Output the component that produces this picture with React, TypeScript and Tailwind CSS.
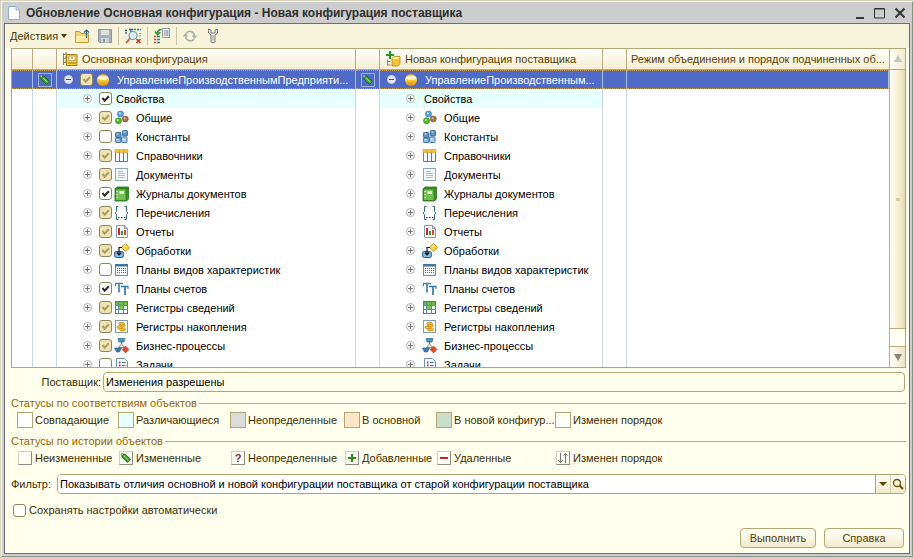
import React from 'react';

type CheckState = 'off' | 'on' | 'partial';
type RowItem = { name: string; state: CheckState; icon?: React.ReactNode };

function Icon({ children }: { children: React.ReactNode }) {
  return (
    <svg viewBox="0 0 16 16" className="size-4 shrink-0" fill="none" aria-hidden="true">
      {children}
    </svg>
  );
}

const icons = {
  sphere: (
    <Icon>
      <defs>
        <linearGradient id="ball" x1="0" y1="0" x2="0" y2="1">
          <stop offset="0" stopColor="#e9a515" />
          <stop offset="0.3" stopColor="#fff3b0" />
          <stop offset="0.55" stopColor="#fbc62c" />
          <stop offset="1" stopColor="#d98d0a" />
        </linearGradient>
      </defs>
      <circle cx="8" cy="8" r="6" fill="url(#ball)" />
      <ellipse cx="8" cy="6" rx="4" ry="2" fill="#fffbe0" opacity="0.8" />
    </Icon>
  ),
  common: (
    <Icon>
      <circle cx="6.5" cy="4" r="3" fill="#5aa3dc" stroke="#2f77b5" strokeWidth="0.7" />
      <circle cx="4.5" cy="10.8" r="3" fill="#52b82c" stroke="#2f8a14" strokeWidth="0.7" />
      <circle cx="11.3" cy="9" r="3" fill="#a8724c" stroke="#845030" strokeWidth="0.7" />
      <circle cx="5.8" cy="3.2" r="1" fill="#cfe8fa" />
      <circle cx="3.8" cy="10" r="1" fill="#c0f0a0" />
      <circle cx="10.6" cy="8.2" r="1" fill="#dfc0a8" />
    </Icon>
  ),
  constants: (
    <Icon>
      <g stroke="#285f8c" strokeWidth="0.8">
        <rect x="1.5" y="3.5" width="5.5" height="5" rx="0.8" fill="#5b96c4" />
        <rect x="8.5" y="1.5" width="5" height="5.5" rx="0.8" fill="#5b96c4" />
        <rect x="1.5" y="9" width="5.5" height="4.5" rx="0.8" fill="#85badf" />
        <rect x="7.5" y="8" width="5.5" height="5.5" rx="0.8" fill="#a7d0ea" />
      </g>
      <path d="M2.5 5h2M9.5 3h2M2.5 10.5h2M8.5 10h2" stroke="#d8edfa" />
    </Icon>
  ),
  catalogs: (
    <Icon>
      <path d="M1.5 2v11.5h12V2M5.5 4v9.500M9.500 4v9.500" stroke="#56809f" />
      <path d="M2 4h3v9H2zM6 4h3v9H6zM10 4h3v9h-3z" fill="#f4fafd" />
      <path d="M1 1.500h4v3H1zM5.500 1.500h4v3h-4zM10 1.500h4v3h-4z" fill="#f6c335" stroke="#c7922a" strokeWidth="0.500" />
    </Icon>
  ),
  documents: (
    <Icon>
      <rect x="1.5" y="1.5" width="12" height="12" fill="#f5fafd" stroke="#8ba8bd" />
      <path d="M4 4.500h5M4 6.500h7M4 8.500h7M4 10.500h7" stroke="#a5c0d5" />
    </Icon>
  ),
  journals: (
    <Icon>
      <path d="M3 1h11.500v12l-2 2H1V3z" fill="#388f28" stroke="#22701a" strokeWidth="0.800" />
      <rect x="1.500" y="3" width="10.500" height="11.500" fill="#74bf50" stroke="#2b7d1c" strokeWidth="0.800" />
      <rect x="5.500" y="5" width="4.500" height="3" fill="#e8f8d8" />
      <path d="M2.500 5.500h1.500M2.500 8.500h1.500M2.500 11.500h1.500" stroke="#e4f4d4" />
    </Icon>
  ),
  enums: (
    <Icon>
      <path d="M4.500 1.500H2.500v5L1 8l1.500 1.500v5h2M10.500 1.500h2v5L14 8l-1.500 1.500v5h-2" stroke="#336889" />
      <path d="M4 12.500h1.500M7 12.500h1.500M10 12.500h1.500" stroke="#223f55" />
    </Icon>
  ),
  reports: (
    <Icon>
      <path d="M2.500 1.500h8l3 3v9h-11z" fill="#f3f9fc" stroke="#7f9fb5" />
      <path d="M10.500 1.500v3h3" stroke="#7f9fb5" />
      <path d="M4 4h2v7H4z" fill="#d52a20" />
      <path d="M7 7h2v4H7z" fill="#2ea02e" />
      <path d="M10 6h2v5h-2z" fill="#e0442c" />
    </Icon>
  ),
  processing: (
    <Icon>
      <path d="M11.500 0.500l4 4-4 4-4-4z" fill="#fbd43c" stroke="#c1912a" strokeWidth="0.800" />
      <path d="M10 4l1.500-2" stroke="#fff3b0" />
      <rect x="0.700" y="8.500" width="8.600" height="6" rx="1.500" fill="#8cc0e6" stroke="#235c8e" />
      <path d="M8 4.500H5V12M2.800 9.500L5 12l2.200-2.500" stroke="#0d1a26" strokeWidth="1.200" />
    </Icon>
  ),
  characteristics: (
    <Icon>
      <rect x="1.500" y="2.500" width="12" height="11" fill="#f4f8fb" stroke="#7190a8" />
      <path d="M1 2h13v2.500H1z" fill="#3f78a6" />
      <path d="M3.500 6v6M5.500 6v6M7.500 6v6M9.500 6v6M11.500 6v6" stroke="#5c6f7e" strokeDasharray="1 1" />
    </Icon>
  ),
  accounts: (
    <Icon>
      <path d="M1 2.500h8M5 2v9.500" stroke="#3d87ba" strokeWidth="1.700" />
      <path d="M7 5.500h7.500M11 5v9" stroke="#3478aa" strokeWidth="1.700" />
      <path d="M1.500 3v2M14 6v2" stroke="#3478aa" />
    </Icon>
  ),
  infoRegisters: (
    <Icon>
      <rect x="1.500" y="1.500" width="12" height="12" fill="#f2f8fb" stroke="#4f7894" />
      <path d="M2 2h11v3H2z" fill="#6abf38" />
      <path d="M5 6h4v3H5z" fill="#7cc850" />
      <path d="M4.500 2v12M9.500 2v12M1 5.500h13M1 9.500h13" stroke="#5c8aa2" />
    </Icon>
  ),
  accumRegisters: (
    <Icon>
      <rect x="1.500" y="1.500" width="12" height="12" fill="#f5fafd" stroke="#7d9db3" />
      <g fill="#f8bf23" stroke="#c28510" strokeWidth="0.700">
        <ellipse cx="8.500" cy="10.500" rx="3" ry="1.500" />
        <ellipse cx="6" cy="8.300" rx="3" ry="1.500" />
        <ellipse cx="8.300" cy="6.300" rx="3" ry="1.500" />
        <ellipse cx="7.500" cy="4.600" rx="3" ry="1.300" />
      </g>
    </Icon>
  ),
  processes: (
    <Icon>
      <path d="M4 0.500h7l-1 3.500H5z" fill="#4b97c8" stroke="#24628e" strokeWidth="0.700" />
      <path d="M7.500 4v3M7 8L3.500 11M8 8l3.500 3" stroke="#4c5f6c" />
      <path d="M7.500 5.500l3 4h-6z" fill="#f5e4d0" stroke="#6d7c88" strokeWidth="0.700" />
      <path d="M0.500 10h7L5.500 14h-3z" fill="#3f7fae" stroke="#24557c" strokeWidth="0.600" />
      <path d="M11.500 8l3.500 3.500-3.500 3.500L8 11.500z" fill="#ee4424" stroke="#a82c14" strokeWidth="0.500" />
    </Icon>
  ),
  tasks: (
    <Icon>
      <path d="M2.500 1.500h8l3 3v9h-11z" fill="#eef6fb" stroke="#6e90a8" />
      <path d="M5 5.500h1.500M5 8.500h1.500M5 11.500h1.500" stroke="#d83a2c" strokeWidth="2" />
      <path d="M8 5.500h3.500M8 8.500h3.500M8 11.500h3.500" stroke="#3c6e94" />
    </Icon>
  ),
};

const rows: RowItem[] = [
  { name: 'Свойства', state: 'on' },
  { name: 'Общие', state: 'partial', icon: icons.common },
  { name: 'Константы', state: 'off', icon: icons.constants },
  { name: 'Справочники', state: 'partial', icon: icons.catalogs },
  { name: 'Документы', state: 'partial', icon: icons.documents },
  { name: 'Журналы документов', state: 'on', icon: icons.journals },
  { name: 'Перечисления', state: 'partial', icon: icons.enums },
  { name: 'Отчеты', state: 'partial', icon: icons.reports },
  { name: 'Обработки', state: 'partial', icon: icons.processing },
  { name: 'Планы видов характеристик', state: 'off', icon: icons.characteristics },
  { name: 'Планы счетов', state: 'on', icon: icons.accounts },
  { name: 'Регистры сведений', state: 'partial', icon: icons.infoRegisters },
  { name: 'Регистры накопления', state: 'partial', icon: icons.accumRegisters },
  { name: 'Бизнес-процессы', state: 'partial', icon: icons.processes },
  { name: 'Задачи', state: 'off', icon: icons.tasks },
];

function Check({ state, label, id }: { state: CheckState; label?: string; id?: string }) {
  return (
    <span className="relative flex size-[13px] shrink-0">
      <input
        id={id}
        type="checkbox"
        aria-label={label}
        defaultChecked={state !== 'off'}
        className={`size-[13px] appearance-none rounded-[3px] border border-[#8f8558] ${
          state === 'partial' ? 'bg-[#efe5b4]' : 'bg-white'
        }`}
      />
      {state !== 'off' && (
        <svg viewBox="0 0 13 13" className="pointer-events-none absolute inset-0 size-[13px]" fill="none" aria-hidden="true">
          <path d="M3.500 6l2.200 2.700L9.800 4.300" stroke={state === 'on' ? '#2b2b2b' : '#a89c68'} strokeWidth="2" />
        </svg>
      )}
    </span>
  );
}

function Expander({ open, label }: { open?: boolean; label: string }) {
  return (
    <button type="button" aria-label={label} className="flex size-[11px] shrink-0">
      <svg viewBox="0 0 11 11" className="size-[11px]" fill="none" aria-hidden="true">
        <circle cx="5.500" cy="5.500" r="4" fill={open ? '#e8ebf6' : '#fff'} stroke={open ? '#c9cfe6' : '#b0b0b0'} />
        <path d={open ? 'M3 5.500h5' : 'M3 5.500h5M5.500 3v5'} stroke={open ? '#3a4a90' : '#777'} />
      </svg>
    </button>
  );
}

function Pencil() {
  return (
    <svg viewBox="0 0 12 12" className="size-3 shrink-0" fill="none" aria-hidden="true">
      <path d="M1.500 1.500l3.500.8 5.500 5-3 3.200-5.300-5.200z" fill="#3fa52c" stroke="#166412" strokeWidth="0.900" />
      <path d="M4 3.800l4.500 4.400" stroke="#a4e488" />
      <path d="M1.300 1.300l2 .5-1.500 1.700z" fill="#f4e4b4" />
    </svg>
  );
}

const cell = 'h-[19px] border-r border-[#ccd6de] p-0 text-black';
const selected = 'h-[19px] border-y border-r border-y-[#c39a52] border-r-[#a9bfe0] [border-top-style:dotted] [border-bottom-style:dotted] bg-[#506bc7] p-0 text-white';
const head = 'h-[21px] border-b border-r border-[#b9ad7e] bg-linear-to-b from-[#fffef9] to-[#f5eed3] p-0 text-left font-normal text-[#574100]';

function CompareTable() {
  return (
    <div className="flex min-h-0 flex-1 overflow-hidden border border-[#b2a675] bg-white">
      <div className="min-w-0 flex-1 overflow-hidden">
        <table className="w-full table-fixed border-separate border-spacing-0">
          <colgroup>
            <col className="w-[21px]" />
            <col className="w-6" />
            <col className="w-[299px]" />
            <col className="w-6" />
            <col className="w-[223px]" />
            <col className="w-6" />
            <col />
          </colgroup>
          <thead>
            <tr>
              <th className={head} />
              <th className={head} />
              <th className={head}>
                <div className="flex items-center gap-1 pl-[5px]">
                  <Icon>
                    <path d="M1.500 2v12M1.500 3.500h3M1.500 7.500h3M1.500 11.500h3" stroke="#8a8460" />
                    <path d="M3 2h2M3 6h2M3 10h2" stroke="#d04830" />
                    <path d="M4.500 3.500h10.500v11H4.500z" fill="#f4cb3c" stroke="#a9821c" />
                    <rect x="7" y="5" width="6" height="4.500" fill="#fffbe6" stroke="#b89a4c" strokeWidth="0.700" />
                    <path d="M10 5.500v2.500M6 12h8" stroke="#9a7a18" />
                  </Icon>
                  <span>Основная конфигурация</span>
                </div>
              </th>
              <th className={head} />
              <th className={head}>
                <div className="flex items-center gap-1 pl-[5px]">
                  <Icon>
                    <path d="M5 0v8M1 4h8" stroke="#2a962a" strokeWidth="2.200" />
                    <path d="M2.500 8.500v6M2.500 10.500h3M2.500 14h3" stroke="#8a8460" />
                    <path d="M7 7.500l2-2h6v7l-2 2.500H7z" fill="#f3c32e" stroke="#b98a14" strokeWidth="0.800" />
                    <path d="M7.500 8h5l2-2H9.500z" fill="#fff0a0" />
                  </Icon>
                  <span>Новая конфигурация поставщика</span>
                </div>
              </th>
              <th className={head} />
              <th className="h-[21px] border-b border-[#b9ad7e] bg-linear-to-b from-[#fffef9] to-[#f5eed3] p-0 text-left font-normal text-[#574100]">
                <div className="truncate pl-1">Режим объединения и порядок подчиненных об...</div>
              </th>
            </tr>
          </thead>
          <tbody>
            <tr>
              <td className={selected} />
              <td className={selected}>
                <div className="mx-auto flex size-3.5 items-center justify-center border border-[#9fb0dc]"><Pencil /></div>
              </td>
              <td className={selected}>
                <div className="flex items-center pl-1.5">
                  <Expander open label="Свернуть основную конфигурацию" />
                  <span className="ml-1.5 flex"><Check state="partial" label="Основная конфигурация" /></span>
                  <span className="ml-0.5 flex">{icons.sphere}</span>
                  <span className="ml-1.5 min-w-0 truncate">УправлениеПроизводственнымПредприяти...</span>
                </div>
              </td>
              <td className={selected}>
                <div className="mx-auto flex size-3.5 items-center justify-center border border-[#9fb0dc]"><Pencil /></div>
              </td>
              <td className={selected}>
                <div className="flex items-center pl-1.5">
                  <Expander open label="Свернуть новую конфигурацию" />
                  <span className="ml-1.5 flex">{icons.sphere}</span>
                  <span className="ml-1.5 min-w-0 truncate">УправлениеПроизводственным...</span>
                </div>
              </td>
              <td className={selected} />
              <td className={selected} />
            </tr>
            {rows.map((row) => (
              <tr key={row.name}>
                <td className={cell} />
                <td className={cell} />
                <td className={`${cell} ${row.icon ? '' : 'bg-[#e6ffff]'}`}>
                  <div className="flex items-center pl-[25px]">
                    <Expander label={`Развернуть: ${row.name}`} />
                    <span className="ml-1.5 flex"><Check state={row.state} label={row.name} /></span>
                    {row.icon && <span className="ml-0.5 flex">{row.icon}</span>}
                    <span className={row.icon ? 'ml-1.5' : 'ml-1'}>{row.name}</span>
                  </div>
                </td>
                <td className={cell} />
                <td className={`${cell} ${row.icon ? '' : 'bg-[#e6ffff]'}`}>
                  <div className="flex items-center pl-[25px]">
                    <Expander label={`Развернуть: ${row.name}`} />
                    {row.icon && <span className="ml-1.5 flex">{row.icon}</span>}
                    <span className={row.icon ? 'ml-1.5' : 'ml-2'}>{row.name}</span>
                  </div>
                </td>
                <td className={cell} />
                <td className="h-[19px] p-0" />
              </tr>
            ))}
          </tbody>
        </table>
      </div>
      <div className="flex w-4 shrink-0 flex-col border-l border-[#b9ad7e]">
        <button type="button" aria-label="Прокрутить вверх" className="flex h-[21px] items-center justify-center border-b border-[#b9ad7e] bg-linear-to-r from-[#fffef9] to-[#f2ebcf]">
          <svg viewBox="0 0 8 8" className="size-2" aria-hidden="true"><path d="M4 0l4 7H0z" fill="#c4c4bc" /></svg>
        </button>
        <div className="flex flex-1 items-center justify-center border-b border-[#b9ad7e] bg-linear-to-r from-[#fffef6] via-[#f8f1d6] to-[#e6dbb0]">
          <span className="h-[3px] w-1 bg-[#d8cea4]" />
        </div>
        <div className="h-[17px] bg-[#fffff4]" />
        <button type="button" aria-label="Прокрутить вниз" className="flex h-[21px] items-center justify-center border-t border-[#b9ad7e] bg-linear-to-r from-[#fffef9] to-[#eee5c4]">
          <svg viewBox="0 0 8 8" className="size-2" aria-hidden="true"><path d="M4 8l4-7H0z" fill="#85857c" /></svg>
        </button>
      </div>
    </div>
  );
}

function Separator() {
  return <span className="h-[18px] w-px bg-[#c9c5a8]" />;
}

function Toolbar() {
  return (
    <div className="flex h-6 shrink-0 items-center bg-[#f6f5db] pl-[5px]">
      <button type="button" className="flex items-center gap-[3px] text-[#4a3a08]">
        Действия
        <svg viewBox="0 0 6 4" className="h-1 w-1.5" aria-hidden="true"><path d="M0 0h6L3 4z" fill="#4a3a08" /></svg>
      </button>
      <div className="ml-[7px] flex items-center gap-[5px]">
        <div className="flex gap-[7px]">
          <button type="button" aria-label="Открыть" className="flex">
            <Icon>
              <path d="M1.500 14.500v-11h4l1.500 2h7.500v9z" fill="#f5d474" stroke="#c69a38" />
              <path d="M2 8h12v6H2z" fill="#fbe9a6" />
              <path d="M12.500 10V2M10 4.500L12.500 2 15 4.500" stroke="#2f6690" strokeWidth="1.200" />
            </Icon>
          </button>
          <button type="button" aria-label="Сохранить" className="flex">
            <Icon>
              <path d="M1.500 1.500h13v13h-12l-1-1z" fill="#a9b1b5" stroke="#8d969b" />
              <path d="M4 2h8v5H4z" fill="#dfe3e3" />
              <path d="M4 10h8v4.500H4z" fill="#ced4d6" />
              <path d="M6 11h2v3H6z" fill="#8d969b" />
            </Icon>
          </button>
        </div>
        <Separator />
        <button type="button" aria-label="Отбор" className="flex">
          <svg viewBox="0 0 18 16" className="h-4 w-[18px]" fill="none" aria-hidden="true">
            <path d="M1 2.500h2M5 1.500h4M6 3.500h2" stroke="#28587a" strokeWidth="1.500" />
            <path d="M10 1.500h7M1 5h2" stroke="#2f7cae" strokeWidth="1.500" strokeDasharray="2 1" />
            <circle cx="9" cy="7.500" r="4" fill="#d8ecf8" stroke="#7b98ae" strokeWidth="1.200" />
            <path d="M6 10.500L2 15" stroke="#b07a58" strokeWidth="2" />
            <path d="M12.500 11l4 4M16.500 11l-4 4" stroke="#d8301e" strokeWidth="1.700" />
            <path d="M15 5.500h2M15 8h2" stroke="#8a9aa4" />
          </svg>
        </button>
        <Separator />
        <button type="button" aria-label="Установить соответствие" className="flex">
          <svg viewBox="0 0 18 16" className="h-4 w-[18px]" fill="none" aria-hidden="true">
            <path d="M9.500 0.500h7v9h-7z" fill="#f6fafc" stroke="#8ba2b2" />
            <path d="M11 3h1.500M11 5h1.500M11 7h1.500" stroke="#d0402c" />
            <path d="M13 3h2.500M13 5h2.500M13 7h2.500" stroke="#46718f" />
            <path d="M8.500 1.500Q5 1.500 4.500 5M2 3.500l2.500 3 3-2.500" stroke="#2e9226" strokeWidth="1.600" />
            <path d="M1 8.500h2M1 11.500h2M1 14.500h2" stroke="#d0402c" strokeWidth="1.300" />
            <path d="M4 8.500h3M4 11.500h3M4 14.500h3" stroke="#46718f" strokeWidth="1.300" />
          </svg>
        </button>
        <Separator />
        <div className="flex gap-[7px]">
          <button type="button" aria-label="Обновить" className="flex">
            <Icon>
              <path d="M4 5.500Q5.500 3 8.500 3.300Q12 4 12.500 8M12 11Q10.500 13.300 7.500 12.800Q4 12 3.500 8.500" stroke="#a9b0a6" strokeWidth="1.700" />
              <path d="M9.500 7.500H15.500L12.500 10.800zM.5 8.500H6.500L3.500 5.200z" fill="#a9b0a6" />
            </Icon>
          </button>
          <button type="button" aria-label="Настройка" className="flex">
            <Icon>
              <path d="M3.500 1v4L6 7v7q2 1.800 4 0V7l2.500-2V1L10 2.200V5H6V2.200z" fill="#e8e8e2" stroke="#80807a" strokeLinejoin="round" />
              <path d="M8 7.500v5" stroke="#9c9c96" />
            </Icon>
          </button>
        </div>
      </div>
    </div>
  );
}

const matchStatuses = [
  { label: 'Совпадающие', color: 'bg-white' },
  { label: 'Различающиеся', color: 'bg-[#e6ffff]' },
  { label: 'Неопределенные', color: 'bg-[#dcdcdc]' },
  { label: 'В основной', color: 'bg-[#ffe6c8]' },
  { label: 'В новой конфигур...', color: 'bg-[#c8dec8]' },
  { label: 'Изменен порядок', color: 'bg-[#fffffa]' },
];

const historyStatuses: { label: string; mark: React.ReactNode }[] = [
  { label: 'Неизмененные', mark: null },
  { label: 'Измененные', mark: <Pencil /> },
  { label: 'Неопределенные', mark: <span className="font-bold text-[#7a3a2c]">?</span> },
  {
    label: 'Добавленные',
    mark: <svg viewBox="0 0 12 12" className="size-3" aria-hidden="true"><path d="M6 2v8M2 6h8" stroke="#279018" strokeWidth="2" /></svg>,
  },
  {
    label: 'Удаленные',
    mark: <svg viewBox="0 0 12 12" className="size-3" aria-hidden="true"><path d="M2 6h8" stroke="#cc2416" strokeWidth="2" /></svg>,
  },
  {
    label: 'Изменен порядок',
    mark: (
      <svg viewBox="0 0 12 12" className="size-3" fill="none" aria-hidden="true">
        <path d="M3.500 1v9.500M1 8l2.500 2.500L6 8M8.500 11V1.500M6.500 3.500l2-2 2 2" stroke="#777" />
      </svg>
    ),
  },
];

const legendGrid = 'grid h-[18px] grid-cols-[101px_112px_114px_92px_119px_1fr] items-center pl-1.5';

function GroupTitle({ children }: { children: React.ReactNode }) {
  return (
    <div className="flex h-4 items-center gap-0.5 text-[#9a6400]">
      <h2>{children}</h2>
      <span className="h-px flex-1 bg-[#b9ad7e]" />
    </div>
  );
}

export default function App() {
  return (
    <div className="flex h-screen flex-col bg-[#d8d5bd] px-px pt-px pb-0.5 font-['Liberation_Sans',Arial,sans-serif] text-[11px] leading-[14px] text-[#3c2e00]">
      <div className="flex min-h-0 flex-1 flex-col border-t border-r border-b border-l border-t-[#f6f6f2] border-r-[#8f8f8f] border-b-[#8f8f8f] border-l-[#f6f6f2] bg-[#cdcdcd] px-0.5 pb-0.5">
        <header className="flex h-[21px] shrink-0 items-center pr-1 pl-1 text-[#2e2e2e]">
          <svg viewBox="0 0 12 14" className="h-3.5 w-3" fill="none" aria-hidden="true">
            <path d="M.5.5h7.500l3.500 3.500v9.500H.5z" fill="#fff" stroke="#8db0cc" />
            <path d="M8 .5V4h3.500" fill="#d4e6f4" stroke="#8db0cc" />
          </svg>
          <h1 className="ml-1.5 flex-1 text-xs font-bold">Обновление Основная конфигурация - Новая конфигурация поставщика</h1>
          <div className="flex items-center gap-2">
            <button type="button" aria-label="Свернуть" className="flex">
              <svg viewBox="0 0 12 12" className="size-3" aria-hidden="true"><path d="M2 11h8" stroke="#333" strokeWidth="2" /></svg>
            </button>
            <button type="button" aria-label="Развернуть" className="flex">
              <svg viewBox="0 0 12 12" className="size-3" fill="none" aria-hidden="true"><path d="M.5 1.500h10v9.500H.5zM.5 2h10" stroke="#333" /></svg>
            </button>
            <button type="button" aria-label="Закрыть" className="flex">
              <svg viewBox="0 0 12 12" className="size-3" aria-hidden="true"><path d="M1.500 1.500l9 9M10.500 1.500l-9 9" stroke="#333" strokeWidth="2" /></svg>
            </button>
          </div>
        </header>
        <main className="flex min-h-0 flex-1 flex-col border border-[#6e6e6e] bg-[#ffffee]">
          <Toolbar />
          <div className="flex min-h-0 flex-1 flex-col pr-[3px] pb-[5px] pl-1.5">
            <CompareTable />
            <div className="mt-1 flex h-5 shrink-0 items-center pr-px">
              <label htmlFor="vendor" className="w-[92px] pr-0.5 text-right">Поставщик:</label>
              <input id="vendor" readOnly defaultValue="Изменения разрешены" className="h-5 min-w-0 flex-1 rounded-[4px] border border-[#b2a675] bg-[#ffffee] px-0.5 text-black" />
            </div>
            <section className="mt-[3px] shrink-0">
              <GroupTitle>Статусы по соответствиям объектов</GroupTitle>
              <ul className={legendGrid}>
                {matchStatuses.map((s) => (
                  <li key={s.label} className="flex min-w-0 items-center gap-0.5">
                    <span className={`size-4 shrink-0 border border-[#b2a675] ${s.color}`} />
                    <span className="truncate">{s.label}</span>
                  </li>
                ))}
              </ul>
            </section>
            <section className="mt-1 shrink-0">
              <GroupTitle>Статусы по истории объектов</GroupTitle>
              <ul className={legendGrid}>
                {historyStatuses.map((s) => (
                  <li key={s.label} className="flex min-w-0 items-center gap-0.5">
                    <span className="flex w-4 shrink-0 justify-center">
                      <span className="flex size-3.5 items-center justify-center border border-t-[#d4d0c0] border-r-[#8c8c84] border-b-[#8c8c84] border-l-[#d4d0c0] bg-[#fffff6]">{s.mark}</span>
                    </span>
                    <span className="truncate">{s.label}</span>
                  </li>
                ))}
              </ul>
            </section>
            <div className="mt-[7px] flex h-5 shrink-0 items-center">
              <label htmlFor="filter" className="w-[46px]">Фильтр:</label>
              <div className="flex h-5 min-w-0 flex-1 overflow-hidden rounded-[4px] border border-[#b2a675] bg-white">
                <select id="filter" className="min-w-0 flex-1 appearance-none bg-white px-0.5 text-black">
                  <option>Показывать отличия основной и новой конфигурации поставщика от старой конфигурации поставщика</option>
                </select>
                <button type="button" aria-label="Выбрать фильтр" className="flex w-[15px] items-center justify-center border-l border-[#b2a675] bg-linear-to-b from-[#fffef9] to-[#f0e9cb]">
                  <svg viewBox="0 0 8 4" className="h-1 w-2" aria-hidden="true"><path d="M0 0h8L4 4z" fill="#5a4600" /></svg>
                </button>
                <button type="button" aria-label="Найти" className="flex w-[15px] items-center justify-center border-l border-[#d8d0ac] bg-linear-to-b from-[#fffef9] to-[#f0e9cb]">
                  <svg viewBox="0 0 12 12" className="size-3" fill="none" aria-hidden="true">
                    <circle cx="5" cy="5" r="3.500" stroke="#6a5200" strokeWidth="1.300" />
                    <path d="M7.500 7.500l3.500 3.500" stroke="#6a5200" strokeWidth="2" />
                  </svg>
                </button>
              </div>
            </div>
            <div className="mt-[7px] flex h-[18px] shrink-0 items-center gap-[3px] pl-0.5">
              <Check id="autosave" state="off" />
              <label htmlFor="autosave">Сохранять настройки автоматически</label>
            </div>
            <div className="mt-[9px] flex shrink-0 justify-end gap-2 pr-0.5 text-[#574100]">
              <button type="button" className="h-5 w-[76px] rounded-[4px] border border-[#b2a675] bg-linear-to-b from-[#fffffa] to-[#f1ebcd]">Выполнить</button>
              <button type="button" className="h-5 w-20 rounded-[4px] border border-[#b2a675] bg-linear-to-b from-[#fffffa] to-[#f1ebcd]">Справка</button>
            </div>
          </div>
        </main>
      </div>
    </div>
  );
}
